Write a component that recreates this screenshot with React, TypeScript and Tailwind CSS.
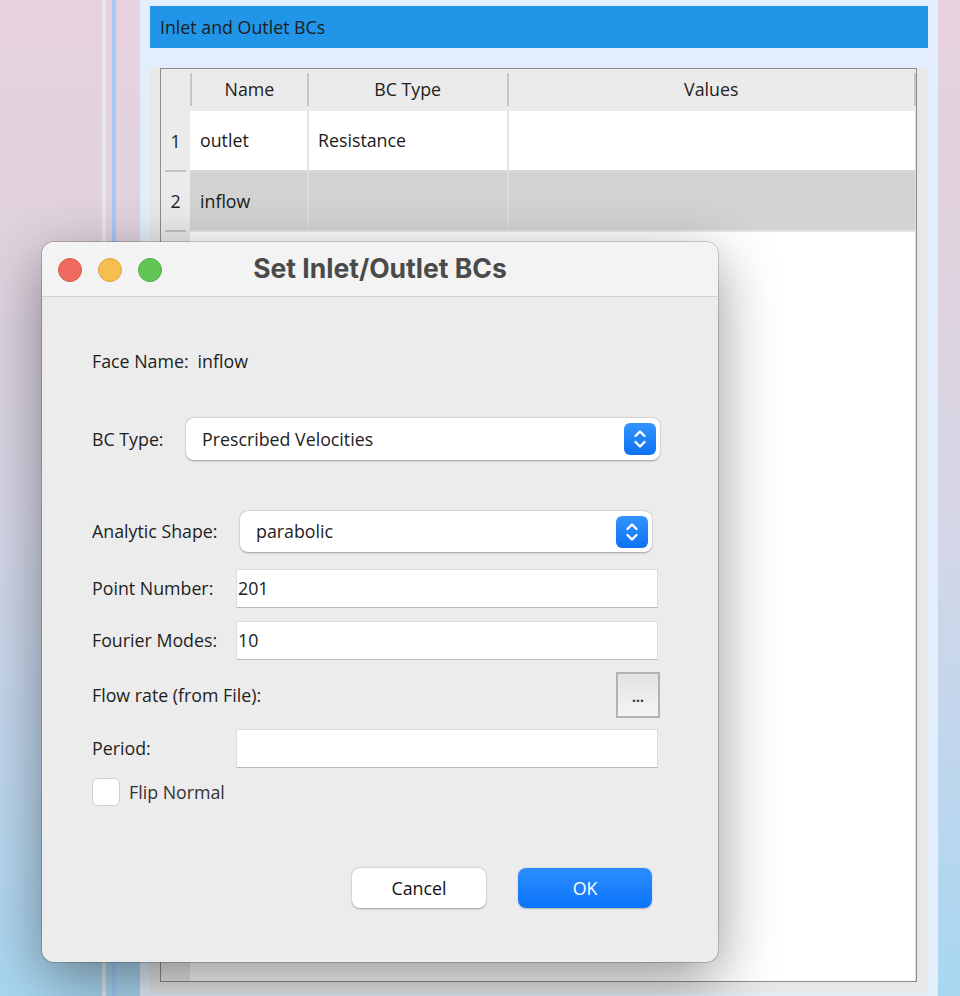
import type { ReactNode } from 'react'

const font = { fontFamily: '"Open Sans", "Noto Sans", sans-serif' }

function Stepper() {
  return (
    <span className="flex h-8 w-8 items-center justify-center rounded-[6px] bg-gradient-to-b from-[#3393ff] to-[#0a72f2]">
      <svg width="16" height="22" viewBox="0 0 16 22" fill="none" stroke="white" strokeWidth="2.4" strokeLinecap="round" strokeLinejoin="round">
        <path d="M3.5 8 L8 3.5 L12.5 8" />
        <path d="M3.5 14 L8 18.5 L12.5 14" />
      </svg>
    </span>
  )
}

function Select({ value }: { value: string }) {
  return (
    <div className="flex h-full flex-1 items-center justify-between rounded-[8px] bg-white pl-4 pr-1 shadow-[0_0.5px_2px_rgba(0,0,0,0.35)]">
      <span className="text-[17.8px] text-[#222]">{value}</span>
      <Stepper />
    </div>
  )
}

function Field({ value }: { value?: string }) {
  return (
    <div className="flex h-full flex-1 items-center border border-[#dcdcdc] border-b-[#b9b9b9] bg-white pl-[1px] text-[17.8px] text-[#1a1a1a]">
      {value}
    </div>
  )
}

function Row({ label, width, children, className }: { label: string; width?: string; children?: ReactNode; className?: string }) {
  return (
    <div className={`flex items-center ${className ?? ''}`}>
      <span className={`shrink-0 text-[17.8px] text-[#1e1e1e] ${width ?? 'flex-1'}`}>{label}</span>
      {children}
    </div>
  )
}

function BcTable() {
  return (
    <div className="flex flex-1 flex-col border border-[#8c8c8c] bg-white">
      <div className="flex h-[42px] bg-[#ebebeb] pb-[1px] text-[17.8px] font-medium text-[#222]">
        <div className="w-[29px]" />
        <div className="my-[4px] w-[2px] bg-[#c6c6c6]" />
        <div className="flex w-[115px] items-center justify-center">Name</div>
        <div className="my-[4px] w-[2px] bg-[#c6c6c6]" />
        <div className="flex w-[198px] items-center justify-center">BC Type</div>
        <div className="my-[4px] w-[2px] bg-[#c6c6c6]" />
        <div className="flex w-[406px] items-center justify-center">Values</div>
        <div className="my-[4px] w-[2px] bg-[#c6c6c6]" />
      </div>
      <div className="flex flex-1">
        <div className="flex w-[29px] flex-col bg-[#ebebeb] text-[17.8px] text-[#222]">
          <div className="flex h-[59px] items-center justify-center pt-[1px]">1</div>
          <div className="mx-[4px] h-[2px] bg-[#c2c2c2]" />
          <div className="flex h-[58px] items-center justify-center">2</div>
          <div className="mx-[4px] h-[2px] bg-[#c2c2c2]" />
        </div>
        <div className="flex flex-1 flex-col text-[17.8px] text-[#1a1a1a]">
          <div className="flex h-[59px] bg-white">
            <div className="flex w-[117px] items-center pl-[10px]">outlet</div>
            <div className="w-[2px] bg-[#e4e4e4]" />
            <div className="flex w-[198px] items-center pl-[9px]">Resistance</div>
            <div className="w-[2px] bg-[#e4e4e4]" />
            <div className="flex-1" />
          </div>
          <div className="h-[2px] bg-[#d9d9d9]" />
          <div className="flex h-[58px] bg-[#d3d3d3]">
            <div className="flex w-[117px] items-center pl-[10px]">inflow</div>
            <div className="w-[2px] bg-[#dcdcdc]" />
            <div className="w-[198px]" />
            <div className="w-[2px] bg-[#dcdcdc]" />
            <div className="flex-1" />
          </div>
          <div className="h-[2px] bg-[#e6e6e6]" />
        </div>
        <div className="w-[1px] bg-[#e0e0e0]" />
      </div>
    </div>
  )
}

function Dialog() {
  return (
    <div className="absolute left-[42px] top-[242px] flex h-[720px] w-[676px] flex-col overflow-hidden rounded-[12px] bg-[#ececec] shadow-[0_18px_60px_rgba(0,0,0,0.42),0_0_0_1px_rgba(0,0,0,0.18)]">
      <div className="relative flex h-[55px] shrink-0 items-center justify-center border-b border-[#d2d2d2] bg-[#f2f3f2]">
        <div className="absolute left-4 top-4 flex gap-4">
          <span className="h-6 w-6 rounded-full border border-[#d95b52] bg-[#ee6a5f]" />
          <span className="h-6 w-6 rounded-full border border-[#dea73f] bg-[#f5bf4f]" />
          <span className="h-6 w-6 rounded-full border border-[#53ad47] bg-[#61c554]" />
        </div>
        <h1 className="text-[26.5px] font-bold text-[#4a4a4a]" style={{ fontFamily: 'Inter, "Open Sans", sans-serif' }}>
          Set Inlet/Outlet BCs
        </h1>
      </div>

      <div className="flex flex-col pl-[50px] pr-[58px]">
        <div className="mt-[52px] flex h-6 items-center gap-[9px] text-[17.8px] text-[#1e1e1e]">
          <span>Face Name:</span>
          <span>inflow</span>
        </div>

        <Row label="BC Type:" width="w-[94px]" className="mt-[45px] h-[42px]">
          <Select value="Prescribed Velocities" />
        </Row>

        <Row label="Analytic Shape:" width="w-[148px]" className="mr-[8px] mt-[51px] h-[41px]">
          <Select value="parabolic" />
        </Row>

        <Row label="Point Number:" width="w-[144px]" className="mr-[2px] mt-[17px] h-[39px]">
          <Field value="201" />
        </Row>

        <Row label="Fourier Modes:" width="w-[144px]" className="mr-[2px] mt-[13px] h-[39px]">
          <Field value="10" />
        </Row>

        <Row label="Flow rate (from File):" className="mt-[12px] h-[46px]">
          <button className="flex h-[46px] w-[44px] items-center justify-center border-2 border-[#b2b2b2] bg-gradient-to-b from-[#e3e3e3] to-[#f4f4f4] pt-[4px] text-[14px] font-bold leading-none text-[#333]">
            ...
          </button>
        </Row>

        <Row label="Period:" width="w-[144px]" className="mr-[2px] mt-[11px] h-[39px]">
          <Field />
        </Row>

        <label className="mt-[10px] flex h-7 items-center gap-[9px]">
          <span className="h-7 w-7 rounded-[6px] border border-[#d2d2d2] bg-white" />
          <span className="text-[17.8px] text-[#333]">Flip Normal</span>
        </label>

        <div className="mr-[8px] mt-[62px] flex justify-end gap-8">
          <button className="h-10 w-[134px] rounded-[8px] bg-white text-[17.8px] text-[#111] shadow-[0_0.5px_2px_rgba(0,0,0,0.35)]">
            Cancel
          </button>
          <button className="h-10 w-[134px] rounded-[8px] bg-gradient-to-b from-[#2c8dff] to-[#0874fa] text-[17.8px] text-white shadow-[0_0.5px_1.5px_rgba(0,0,0,0.25)]">
            OK
          </button>
        </div>
      </div>
    </div>
  )
}

export default function App() {
  return (
    <div
      className="relative flex h-[996px] w-[960px] overflow-hidden bg-[linear-gradient(180deg,#e6d2dc_0%,#e0d3de_25%,#d7d6e6_50%,#c3d6ec_72%,#a8d7f1_100%)]"
      style={font}
    >
      <div className="w-[102px] shrink-0" />
      <div className="w-1 shrink-0 bg-[#ececec]/80" />
      <div className="w-[6px] shrink-0" />
      <div className="w-1 shrink-0 bg-[#a6c9f8]" />
      <div className="w-6 shrink-0" />

      <div className="flex w-[798px] shrink-0 flex-col bg-[#e3eefc] px-[10px] pb-[3px] pt-[6px]">
        <div className="flex h-[42px] items-center bg-[#2196e8] px-[10px] text-[17.8px] text-[#1c1c1c]">
          Inlet and Outlet BCs
        </div>
        <div className="mt-[20px] flex flex-1 flex-col bg-[#e8e8e8] pb-[11px] pl-[10px] pr-[11px]">
          <BcTable />
        </div>
      </div>

      <Dialog />
    </div>
  )
}
